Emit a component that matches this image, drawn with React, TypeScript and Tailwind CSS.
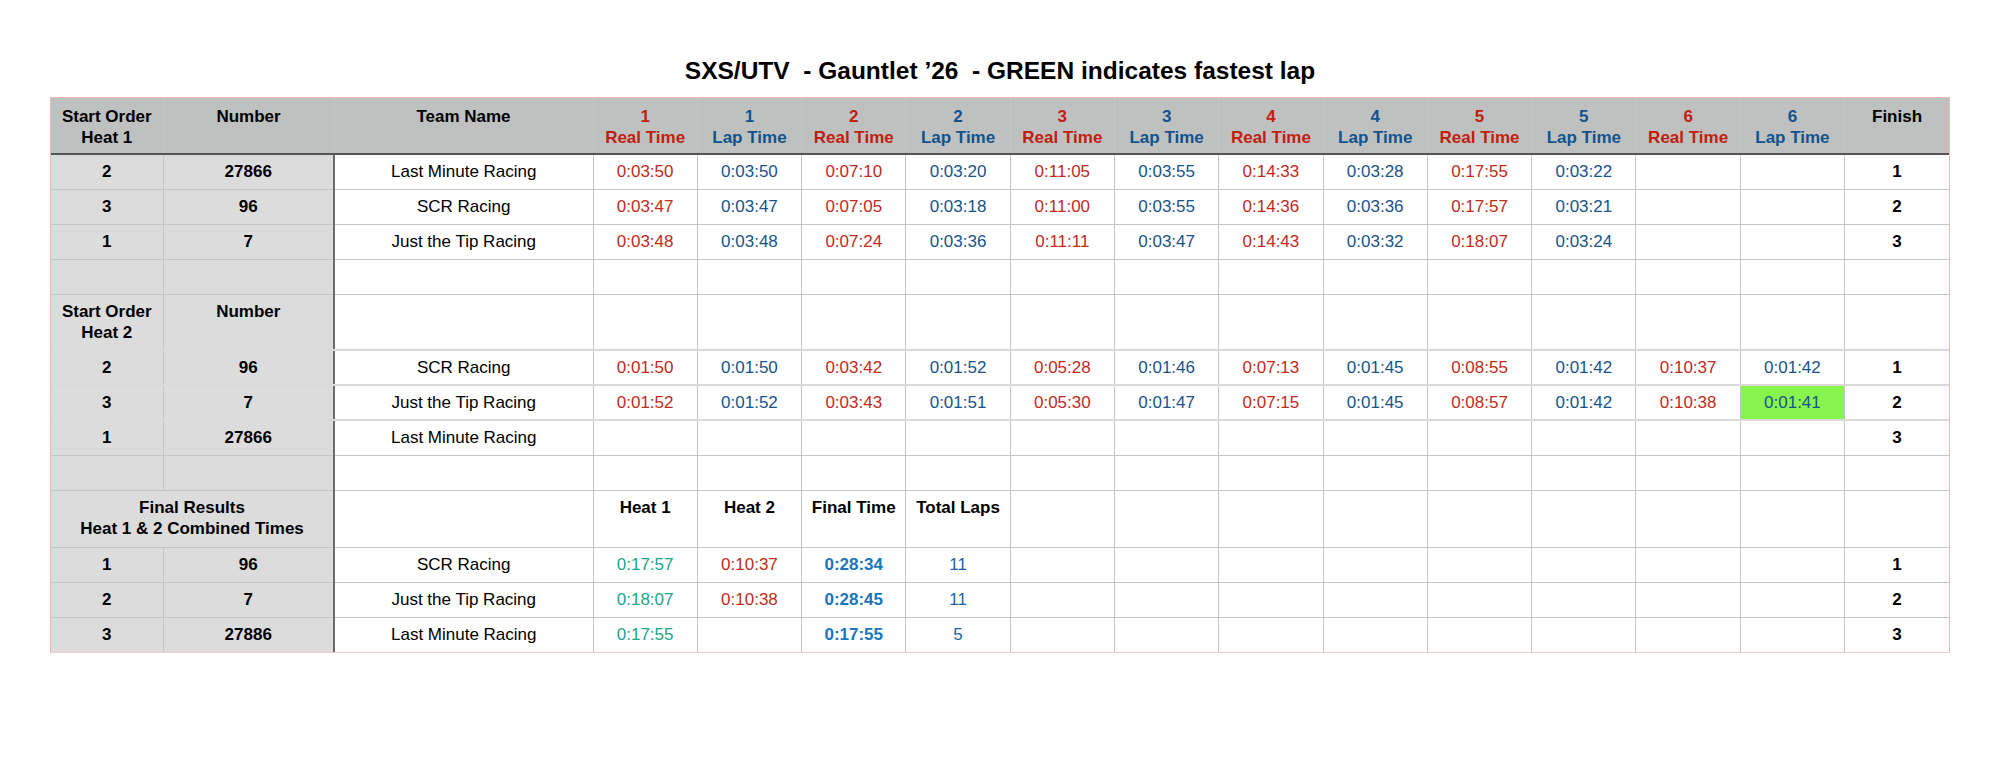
import React from "react";

const RED = "text-[#c42a1a]";
const BLUE = "text-[#17548b]";

type Lap = { v: string; c?: string };

const heat1 = [
  { pos: "2", num: "27866", team: "Last Minute Racing", laps: ["0:03:50", "0:03:50", "0:07:10", "0:03:20", "0:11:05", "0:03:55", "0:14:33", "0:03:28", "0:17:55", "0:03:22", "", ""], fin: "1" },
  { pos: "3", num: "96", team: "SCR Racing", laps: ["0:03:47", "0:03:47", "0:07:05", "0:03:18", "0:11:00", "0:03:55", "0:14:36", "0:03:36", "0:17:57", "0:03:21", "", ""], fin: "2" },
  { pos: "1", num: "7", team: "Just the Tip Racing", laps: ["0:03:48", "0:03:48", "0:07:24", "0:03:36", "0:11:11", "0:03:47", "0:14:43", "0:03:32", "0:18:07", "0:03:24", "", ""], fin: "3" },
];

const heat2 = [
  { pos: "2", num: "96", team: "SCR Racing", laps: ["0:01:50", "0:01:50", "0:03:42", "0:01:52", "0:05:28", "0:01:46", "0:07:13", "0:01:45", "0:08:55", "0:01:42", "0:10:37", "0:01:42"], fin: "1" },
  { pos: "3", num: "7", team: "Just the Tip Racing", laps: ["0:01:52", "0:01:52", "0:03:43", "0:01:51", "0:05:30", "0:01:47", "0:07:15", "0:01:45", "0:08:57", "0:01:42", "0:10:38", "0:01:41"], fin: "2", fastest: 11 },
  { pos: "1", num: "27866", team: "Last Minute Racing", laps: ["", "", "", "", "", "", "", "", "", "", "", ""], fin: "3" },
];

const finals = [
  { pos: "1", num: "96", team: "SCR Racing", h1: "0:17:57", h2: "0:10:37", ft: "0:28:34", tl: "11", fin: "1" },
  { pos: "2", num: "7", team: "Just the Tip Racing", h1: "0:18:07", h2: "0:10:38", ft: "0:28:45", tl: "11", fin: "2" },
  { pos: "3", num: "27886", team: "Last Minute Racing", h1: "0:17:55", h2: "", ft: "0:17:55", tl: "5", fin: "3" },
];

const td = "border-r border-b border-[#c6c6c6] text-center p-0";
const grey = "bg-[#dcdcdc]";
const teamCell = "border-l-2 border-l-[#6b6b6b]";

function EmptyRow() {
  return (
    <tr className="h-[35px]">
      <td className={`${td} ${grey}`}></td>
      <td className={`${td} ${grey}`}></td>
      <td className={`${td} ${teamCell}`}></td>
      {Array.from({ length: 13 }).map((_, i) => (
        <td key={i} className={`${td} ${i === 12 ? "border-r-0" : ""}`}></td>
      ))}
    </tr>
  );
}

function LapRow({ r, thick }: { r: { pos: string; num: string; team: string; laps: string[]; fin: string; fastest?: number }; thick?: boolean }) {
  const b = thick ? "border-b-2 border-b-[#dadada]" : "";
  return (
    <tr className="h-[35px]">
      <td className={`${td} ${grey} ${b} font-bold`}>{r.pos}</td>
      <td className={`${td} ${grey} ${b} font-bold`}>{r.num}</td>
      <td className={`${td} ${teamCell} ${b}`}>{r.team}</td>
      {r.laps.map((l, i) => (
        <td
          key={i}
          className={`${td} ${b} ${i % 2 === 0 ? RED : BLUE} ${r.fastest === i ? "bg-[#88f54e]" : ""}`}
        >
          {l}
        </td>
      ))}
      <td className={`${td} ${b} border-r-0 font-bold`}>{r.fin}</td>
    </tr>
  );
}

export default function App() {
  const lapHeads: Lap[] = [];
  for (let i = 1; i <= 6; i++) {
    lapHeads.push({ v: String(i), c: "Real Time" });
    lapHeads.push({ v: String(i), c: "Lap Time" });
  }

  const head = `${td} border-b-2 border-b-[#555] align-top pt-[8px] font-bold`;

  return (
    <div
      className="w-[2000px] h-[778px] bg-white text-black"
      style={{ fontFamily: '"Liberation Sans", Arial, Helvetica, sans-serif' }}
    >
      <h1 className="pt-[56px] h-[97px] text-center text-[24.5px] leading-[30px] font-bold whitespace-pre">
        {"SXS/UTV  - Gauntlet \u201926  - GREEN indicates fastest lap"}
      </h1>
      <div className="mx-[50px] border border-[#f3b5b5] border-b-[#f7cccc]">
        <table className="w-full table-fixed border-collapse text-[17px] leading-[21px]">
          <colgroup>
            <col className="w-[112px]" />
            <col className="w-[171px]" />
            <col className="w-[259px]" />
            {Array.from({ length: 13 }).map((_, i) => (
              <col key={i} />
            ))}
          </colgroup>
          <tbody>
            <tr className="h-[56px] bg-[#bfc1c0]">
              <td className={head}>
                Start Order
                <br />
                Heat 1
              </td>
              <td className={head}>Number</td>
              <td className={head}>Team Name</td>
              {lapHeads.map((h, i) => (
                <td key={i} className={`${head} ${i % 2 === 0 ? "text-[#c0200f]" : "text-[#12538d]"}`}>
                  {h.v}
                  <br />
                  {h.c}
                </td>
              ))}
              <td className={`${head} border-r-0`}>Finish</td>
            </tr>

            {heat1.map((r, i) => (
              <LapRow key={i} r={r} />
            ))}
            <EmptyRow />

            <tr className="h-[56px]">
              <td className={`${td} ${grey} border-b-2 border-b-[#dadada] align-top pt-[6px] font-bold`}>
                Start Order
                <br />
                Heat 2
              </td>
              <td className={`${td} ${grey} border-b-2 border-b-[#dadada] align-top pt-[6px] font-bold`}>Number</td>
              <td className={`${td} ${teamCell} border-b-2 border-b-[#dadada]`}></td>
              {Array.from({ length: 13 }).map((_, i) => (
                <td key={i} className={`${td} border-b-2 border-b-[#dadada] ${i === 12 ? "border-r-0" : ""}`}></td>
              ))}
            </tr>
            {heat2.map((r, i) => (
              <LapRow key={i} r={r} thick={i < 2} />
            ))}
            <EmptyRow />

            <tr className="h-[57px]">
              <td colSpan={2} className={`${td} ${grey} align-top pt-[6px] font-bold`}>
                Final Results
                <br />
                Heat 1 &amp; 2 Combined Times
              </td>
              <td className={`${td} ${teamCell}`}></td>
              {["Heat 1", "Heat 2", "Final Time", "Total Laps"].map((h) => (
                <td key={h} className={`${td} align-top pt-[6px] font-bold whitespace-nowrap`}>
                  {h}
                </td>
              ))}
              {Array.from({ length: 9 }).map((_, i) => (
                <td key={i} className={`${td} ${i === 8 ? "border-r-0" : ""}`}></td>
              ))}
            </tr>
            {finals.map((r, i) => {
              const last = i === 2 ? "border-b-0" : "";
              return (
                <tr key={i} className="h-[35px]">
                  <td className={`${td} ${grey} font-bold ${last}`}>{r.pos}</td>
                  <td className={`${td} ${grey} font-bold ${last}`}>{r.num}</td>
                  <td className={`${td} ${teamCell} ${last}`}>{r.team}</td>
                  <td className={`${td} text-[#18a78a] ${last}`}>{r.h1}</td>
                  <td className={`${td} ${RED} ${last}`}>{r.h2}</td>
                  <td className={`${td} font-bold text-[#1a75bd] ${last}`}>{r.ft}</td>
                  <td className={`${td} text-[#1d62a0] ${last}`}>{r.tl}</td>
                  {Array.from({ length: 8 }).map((_, j) => (
                    <td key={j} className={`${td} ${last}`}></td>
                  ))}
                  <td className={`${td} border-r-0 font-bold ${last}`}>{r.fin}</td>
                </tr>
              );
            })}
          </tbody>
        </table>
      </div>
    </div>
  );
}
